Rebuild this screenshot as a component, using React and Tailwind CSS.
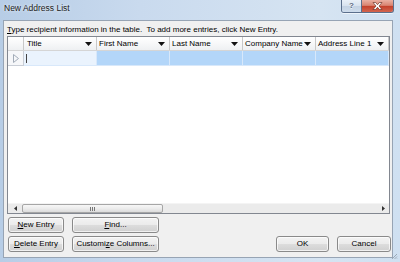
const HeadArrow = () => (
  <svg width="7" height="4" viewBox="0 0 7 4" className="shrink-0">
    <path d="M0 0H7L3.5 4Z" fill="#111" />
  </svg>
);

const HeadCell = ({ label }) => (
  <div className="w-[73px] h-full flex items-center justify-between pl-[2px] pr-[4px] border-r border-[#c8c8c8]">
    <span className="whitespace-nowrap">{label}</span>
    <HeadArrow />
  </div>
);

const BlueCell = () => (
  <div className="w-[73px] h-full bg-[#b3d6f9] border-r border-b border-[#d8e8fa]" />
);

const btnBase =
  "h-[16px] rounded-[3px] border border-[#8a8a8a] bg-[linear-gradient(#f3f3f3,#ebebeb_50%,#dddddd_50%,#d0d0d0)] shadow-[inset_0_0_0_1px_rgba(255,255,255,0.7)] flex items-center justify-center text-[8px] leading-[10px] text-black whitespace-nowrap";

export default function App() {
  return (
    <div className="w-[400px] h-[262px] relative overflow-hidden flex flex-col bg-[linear-gradient(90deg,#b7cde6,#c9daee_35%,#d6e4f2_80%,#cfe0f1)] font-['Liberation_Sans',Arial,sans-serif] text-black">
      {/* Title bar */}
      <div className="h-[20px] shrink-0 flex justify-between items-start pl-[4px] pr-[6px]">
        <div className="pt-[3px] text-[8.5px] leading-[10px] text-[#1a1a1a] [text-shadow:0_0_3px_rgba(255,255,255,0.9)]">
          New Address List
        </div>
        <div className="flex h-[13px] rounded-b-[3px] border border-t-0 border-[#5b6f8c] overflow-hidden shadow-[0_1px_0_rgba(255,255,255,0.6)]">
          <div className="w-[20px] h-full bg-[linear-gradient(#e9f0f8,#d7e2ee_50%,#c3d2e3_50%,#cedcec)] border-r border-[#5b6f8c] flex items-center justify-center text-[8px] font-bold leading-none text-[#5a6a80] [text-shadow:0_1px_0_rgba(255,255,255,0.8)]">
            ?
          </div>
          <div className="w-[31px] h-full bg-[linear-gradient(#eab0a2,#d98471_45%,#c4412b_52%,#d2654f)] flex items-center justify-center">
            <svg width="11" height="8" viewBox="0 0 11 8">
              <path
                d="M1 0.5H3.6L5.5 2.7L7.4 0.5H10L7 4L10 7.5H7.4L5.5 5.3L3.6 7.5H1L4 4Z"
                fill="#fff"
                stroke="#5a2116"
                strokeWidth="0.6"
                strokeLinejoin="round"
              />
            </svg>
          </div>
        </div>
      </div>

      {/* Client area */}
      <div className="flex-1 ml-[3px] mr-[7px] mb-[4px] border border-[#97a4b4] bg-[#f0f0f0] flex flex-col">
        <div className="mt-[4px] pl-[3px] text-[8px] leading-[10px] whitespace-nowrap">
          <span className="underline decoration-[0.5px] underline-offset-1">T</span>ype recipient information in the table.&nbsp; To add more entries, click New Entry.
        </div>

        {/* Grid */}
        <div className="mt-[1px] ml-[3px] w-[383px] h-[178px] border border-[#828790] bg-white flex flex-col">
          {/* Header */}
          <div className="h-[14px] shrink-0 flex text-[8px] leading-[10px] bg-[linear-gradient(#ffffff,#f7f8f9_50%,#eef0f2)] border-b border-[#d5d5d5]">
            <div className="w-[16px] h-full border-r border-[#c8c8c8]" />
            <div className="w-[73px] h-full flex items-center justify-between pl-[3px] pr-[4px] border-r border-[#c8c8c8]">
              <span className="whitespace-nowrap">Title</span>
              <HeadArrow />
            </div>
            <HeadCell label="First Name" />
            <HeadCell label="Last Name" />
            <HeadCell label="Company Name" />
            <HeadCell label="Address Line 1" />
          </div>
          {/* Row */}
          <div className="h-[15px] shrink-0 flex">
            <div className="w-[16px] h-full bg-[#f6f7f9] border-r border-b border-[#c9ced6] flex items-center justify-center">
              <svg width="6" height="9" viewBox="0 0 6 9">
                <path d="M0.5 0.5L5.5 4.5L0.5 8.5Z" fill="none" stroke="#a3acb8" strokeWidth="1" />
              </svg>
            </div>
            <div className="w-[73px] h-full bg-[#eaf3fd] border-r border-b border-[#d8e8fa] flex items-center pl-[2px]">
              <div className="w-px h-[9px] bg-[#444]" />
            </div>
            <BlueCell />
            <BlueCell />
            <BlueCell />
            <BlueCell />
          </div>
          <div className="flex-1" />
          {/* Horizontal scrollbar */}
          <div className="h-[10px] shrink-0 flex bg-[#ebebeb] border-t border-[#f4f4f4]">
            <div className="w-[14px] h-full flex items-center justify-center">
              <svg width="3" height="5" viewBox="0 0 3 5">
                <path d="M3 0V5L0 2.5Z" fill="#333" />
              </svg>
            </div>
            <div className="w-[141px] h-full rounded-[2px] border border-[#a6a6a6] bg-[linear-gradient(#f7f7f7,#ececec_50%,#dcdcdc)] flex items-center justify-center">
              <svg width="5" height="4" viewBox="0 0 5 4">
                <path d="M0.5 0V4M2.5 0V4M4.5 0V4" stroke="#777" strokeWidth="1" />
              </svg>
            </div>
            <div className="flex-1" />
            <div className="w-[11px] h-full flex items-center justify-center">
              <svg width="3" height="5" viewBox="0 0 3 5">
                <path d="M0 0V5L3 2.5Z" fill="#333" />
              </svg>
            </div>
          </div>
        </div>

        {/* Buttons */}
        <div className="mt-[3px] pl-[4px] flex gap-[8px]">
          <div className={`${btnBase} w-[56px]`}>
            <span><span className="underline">N</span>ew Entry</span>
          </div>
          <div className={`${btnBase} w-[87px]`}>
            <span><span className="underline">F</span>ind...</span>
          </div>
        </div>
        <div className="mt-[3px] pl-[4px] pr-[1px] flex justify-between">
          <div className="flex gap-[8px]">
            <div className={`${btnBase} w-[56px]`}>
              <span><span className="underline">D</span>elete Entry</span>
            </div>
            <div className={`${btnBase} w-[87px]`}>
              <span>Customi<span className="underline">z</span>e Columns...</span>
            </div>
          </div>
          <div className="flex gap-[8px]">
            <div className={`${btnBase} w-[53px]`}>OK</div>
            <div className={`${btnBase} w-[54px]`}>Cancel</div>
          </div>
        </div>
      </div>

      {/* Resize grip */}
      <svg className="absolute right-[2px] bottom-[2px]" width="7" height="7" viewBox="0 0 7 7">
        <path d="M6 1L1 6M6 3.5L3.5 6M6 5.5L5.5 6" stroke="#8d9aa8" strokeWidth="0.8" />
      </svg>
    </div>
  );
}
